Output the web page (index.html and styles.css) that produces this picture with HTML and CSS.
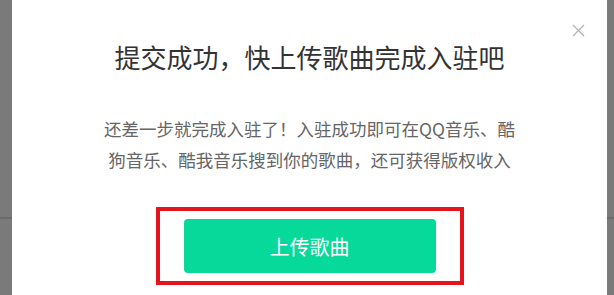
FILE: index.html
```html
<!DOCTYPE html>
<html lang="zh-CN">
<head>
  <meta charset="UTF-8">
  <meta name="viewport" content="width=device-width, initial-scale=1.0">
  <title>提交成功</title>
  <link rel="stylesheet" href="styles.css">
</head>
<body>
  <div class="mask">
    <div class="dialog">
      <span class="close">
        <svg width="13" height="13" viewBox="0 0 13 13"><path d="M1 1L12 12M12 1L1 12" stroke="#b4b4b4" stroke-width="1.3" fill="none"/></svg>
      </span>
      <h2 class="title">提交成功，快上传歌曲完成入驻吧</h2>
      <p class="desc">还差一步就完成入驻了！入驻成功即可在QQ音乐、酷狗音乐、酷我音乐搜到你的歌曲，还可获得版权收入</p>
      <div class="mark">
        <button class="upload">上传歌曲</button>
      </div>
    </div>
  </div>
</body>
</html>
```

FILE: styles.css
```css
body{
  margin: 0;
  font-family: "Noto Sans CJK SC", "Noto Sans", sans-serif;
}
.mask{
  height: 295px;
  overflow: hidden;
  padding: 0 7px 0 12px;
  background: #7a7a7a linear-gradient(to bottom, transparent 217px, #6a6a6a 217px, #6a6a6a 219px, transparent 219px);
}
.dialog{
  position: relative;
  margin-top: -3px;
  height: 320px;
  background: #fff;
  border-radius: 4px;
  text-align: center;
}
.close{
  position: absolute;
  top: 27px;
  right: 22px;
  line-height: 0;
}
.title{
  margin: 0;
  padding-top: 42px;
  font-size: 26px;
  line-height: 36px;
  font-weight: normal;
  color: #333;
}
.desc{
  width: 414px;
  margin: 38px auto 0;
  font-size: 17.5px;
  line-height: 31px;
  color: #666;
}
.mark{
  display: inline-block;
  margin-top: 32px;
  padding: 8px 24px;
  border: 4px solid #e3141c;
}
.upload{
  display: block;
  width: 252px;
  height: 54px;
  border: 0;
  border-radius: 4px;
  background: #07d99b;
  color: #fff;
  font-family: inherit;
  font-size: 20px;
}
```
